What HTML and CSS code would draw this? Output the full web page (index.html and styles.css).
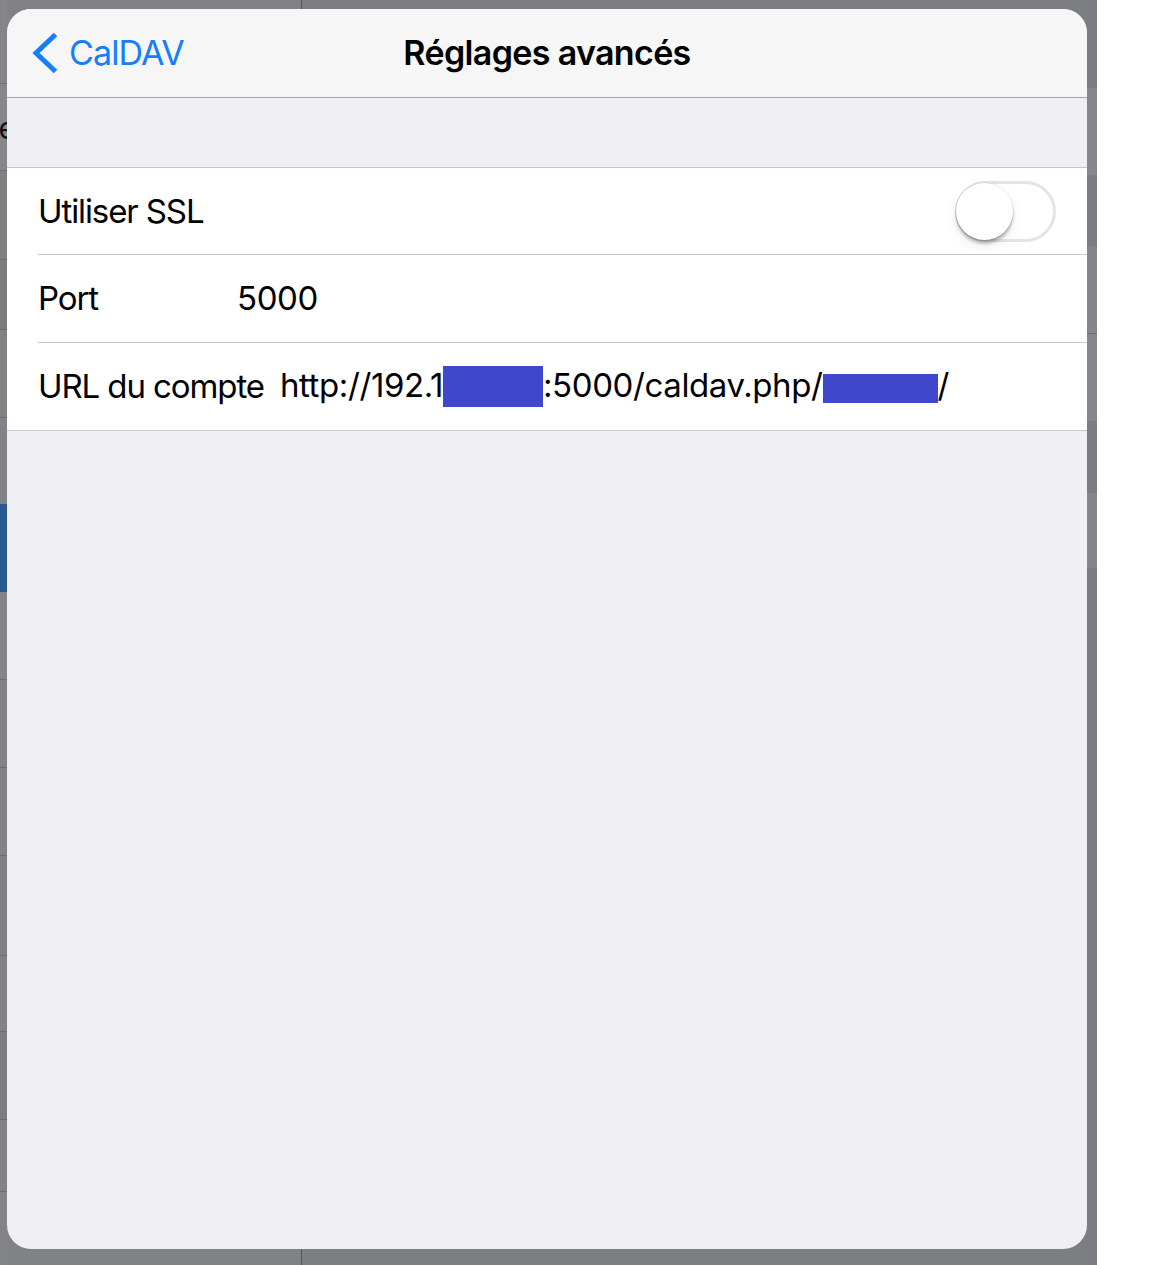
FILE: index.html
```html
<!DOCTYPE html>
<html lang="fr">
<head>
<meta charset="utf-8">
<title>Réglages avancés</title>
<link rel="stylesheet" href="styles.css">
</head>
<body>
<div class="screen">
  <div class="left-strip">
    <div class="stripe s1"></div>
    <div class="stripe s2"><span class="clip-letter">e</span></div>
    <div class="stripe s3"></div>
    <div class="stripe s4"></div>
    <div class="stripe s5"></div>
    <div class="stripe s6"></div>
    <div class="stripe s-blue"></div>
    <div class="stripe s7"></div>
    <div class="stripe s8"></div>
    <div class="stripe s9"></div>
    <div class="stripe s10"></div>
    <div class="stripe s11"></div>
    <div class="stripe s12"></div>
    <div class="stripe s13"></div>
    <div class="stripe s14"></div>
  </div>

  <div class="sheet">
    <header class="navbar">
      <div class="nav-back">
        <svg class="chevron" width="26" height="42" viewBox="0 0 26 42" aria-hidden="true">
          <polyline points="23.5,2.5 4,21 23.5,39.5" fill="none" stroke="#157efb" stroke-width="5" stroke-linejoin="miter" stroke-linecap="butt"/>
        </svg>
        <span class="back-label">CalDAV</span>
      </div>
      <h1 class="nav-title">Réglages avancés</h1>
    </header>

    <div class="group">
      <div class="cell">
        <div class="cell-inner">
          <span class="label">Utiliser SSL</span>
          <span class="switch"><span class="knob"></span></span>
        </div>
      </div>
      <div class="cell">
        <div class="cell-inner">
          <span class="label label-fixed">Port</span>
          <span class="value">5000</span>
        </div>
      </div>
      <div class="cell">
        <div class="cell-inner">
          <span class="label label-url">URL du compte</span>
          <span class="value">http://192.1<span class="redact redact-a"></span>:5000/caldav.php/<span class="redact redact-b"></span>/</span>
        </div>
      </div>
    </div>
  </div>

  <div class="right-strip">
    <div class="rstripe r1"></div>
    <div class="rstripe r2"></div>
    <div class="rstripe r3"></div>
    <div class="rstripe r4"></div>
    <div class="rstripe r5"></div>
    <div class="rstripe r6"></div>
    <div class="rstripe r7"></div>
    <div class="rstripe r8"></div>
  </div>
</div>
</body>
</html>
```

FILE: styles.css
```css
html, body {
  margin: 0;
  padding: 0;
  background: #ffffff;
}

body {
  font-family: Inter, "Noto Sans", "Liberation Sans", sans-serif;
  color: #000;
}

.screen {
  width: 1097px;
  height: 1265px;
  display: grid;
  grid-template-columns: 7px 1080px 10px;
  grid-template-rows: 9px 1240px 16px;
  background-color: #818286;
  background-image: linear-gradient(to right, transparent 301px, #55565a 301px, #55565a 302px, #7d7e82 302px);
}

/* left strip: dimmed master list behind the sheet */
.left-strip {
  grid-column: 1;
  grid-row: 1 / 4;
  display: flex;
  flex-direction: column;
  overflow: hidden;
}

.stripe {
  border-bottom: 1px solid #6c6d71;
  background: #818286;
}
.s1 { height: 83px; background: #858589; }
.s2 { height: 86px; background: #86878b; display: flex; justify-content: flex-end; align-items: center; overflow: hidden; }
.s3 { height: 88px; background: #7f8084; }
.s4 { height: 69px; background: #7a7b7f; }
.s5 { height: 87px; background: #818286; }
.s6 { height: 86px; background: #828387; border-bottom: none; }
.s-blue { height: 88px; background: #29598d; border-bottom: none; }
.s7 { height: 87px; background: #838488; }
.s8 { height: 87px; background: #818286; }
.s9 { height: 87px; background: #818286; }
.s10 { height: 99px; background: #7f8084; }
.s11 { height: 75px; background: #818286; }
.s12 { height: 87px; background: #7c7d81; }
.s13 { height: 71px; background: #818286; }
.s14 { flex: 1; background: #838488; border-bottom: none; }

.clip-letter {
  font-size: 30px;
  line-height: 1;
  color: #111;
  margin-right: -9px;
  margin-top: 2px;
}

/* right strip */
.right-strip {
  grid-column: 3;
  grid-row: 1 / 4;
  display: flex;
  flex-direction: column;
}
.rstripe { background: #7c7d81; }
.r1 { height: 88px; }
.r2 { height: 87px; background: #86878b; }
.r3 { height: 71px; }
.r4 { height: 87px; background: #85868a; border-bottom: 1px solid #6c6d71; }
.r5 { height: 87px; background: #86878b; }
.r6 { height: 72px; }
.r7 { height: 75px; background: #85868a; }
.r8 { flex: 1; background: #7b7c80; }

/* the sheet */
.sheet {
  grid-column: 2;
  grid-row: 2;
  background: #efeff4;
  border-radius: 24px;
  overflow: hidden;
  display: flex;
  flex-direction: column;
}

.navbar {
  height: 89px;
  box-sizing: border-box;
  background: #f6f6f7;
  border-bottom: 1px solid #a7a7ab;
  display: grid;
  grid-template-columns: 1fr auto 1fr;
  align-items: center;
}

.nav-back {
  grid-column: 1;
  grid-row: 1;
  display: flex;
  align-items: center;
  padding-left: 25px;
  gap: 11px;
  color: #157efb;
}

.chevron {
  display: block;
  margin-top: -1px;
}

.back-label {
  font-size: 34px;
  letter-spacing: -0.9px;
  line-height: 1;
}

.nav-title {
  grid-column: 2;
  grid-row: 1;
  margin: 0;
  font-size: 34px;
  font-weight: 600;
  letter-spacing: -0.65px;
  line-height: 1;
  color: #000;
}

.group {
  margin-top: 69px;
  border-top: 1px solid #c8c7cc;
  border-bottom: 1px solid #c8c7cc;
  background: #fff;
}

.cell {
  padding-left: 31px;
  background: #fff;
}

.cell-inner {
  height: 88px;
  box-sizing: border-box;
  border-bottom: 1px solid #c8c7cc;
  padding-right: 31px;
  display: flex;
  align-items: center;
  font-size: 33px;
  letter-spacing: -1.1px;
  line-height: 1;
}

.cell:first-child .cell-inner {
  height: 87px;
}

.cell:last-child .cell-inner {
  border-bottom: none;
  height: 87px;
}

.label {
  flex: none;
}

.label-fixed {
  width: 199px;
}

.label-url {
  margin-right: 16px;
}

.value {
  white-space: nowrap;
  letter-spacing: -0.4px;
}

.redact {
  display: inline-block;
  background: #3f48cc;
}

.redact-a {
  width: 100px;
  height: 41px;
  vertical-align: -10px;
}

.redact-b {
  width: 115px;
  height: 29px;
  vertical-align: -6px;
}

.switch {
  margin-left: auto;
  width: 101px;
  height: 61px;
  box-sizing: border-box;
  border: 3px solid #e4e4e8;
  border-radius: 31px;
  background: #fff;
  display: flex;
  align-items: center;
}

.knob {
  width: 57px;
  height: 57px;
  border-radius: 50%;
  background: #fff;
  margin-left: -2px;
  box-shadow: 0 4px 3px rgba(0, 0, 0, 0.22), 0 1px 1px rgba(0, 0, 0, 0.12), 0 0 0 1px rgba(0, 0, 0, 0.05), 0 6px 14px rgba(0, 0, 0, 0.08);
}
```
